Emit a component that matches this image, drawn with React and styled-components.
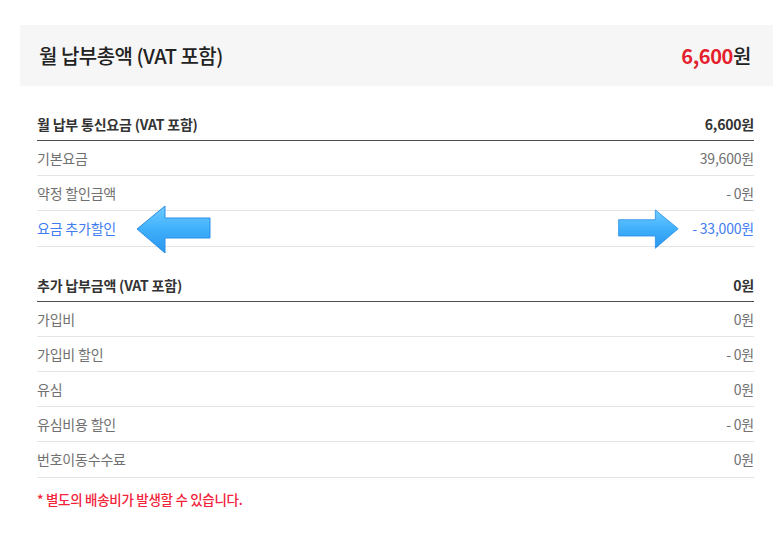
import React from 'react';
import styled, { createGlobalStyle } from 'styled-components';

const GlobalStyle = createGlobalStyle`
  html, body {
    margin: 0;
    padding: 0;
    background: #fff;
  }
  body {
    font-family: "Noto Sans CJK KR", "Noto Sans", sans-serif;
  }
`;

const monthly = [
  { label: '기본요금', value: '39,600원' },
  { label: '약정 할인금액', value: '- 0원' },
  { label: '요금 추가할인', value: '- 33,000원', highlight: true },
];

const extra = [
  { label: '가입비', value: '0원' },
  { label: '가입비 할인', value: '- 0원' },
  { label: '유심', value: '0원' },
  { label: '유심비용 할인', value: '- 0원' },
  { label: '번호이동수수료', value: '0원' },
];

const Arrow = ({ dir }) => {
  // drawn pointing left, mirrored for the right one
  return (
    <svg width="76" height="50" viewBox="0 0 76 50" style={dir === 'right' ? { transform: 'scaleX(-1)' } : undefined}>
      <defs>
        <linearGradient id={`ag-${dir}`} x1="0" y1="0" x2="0" y2="1">
          <stop offset="0" stopColor="#6fcbff" />
          <stop offset="0.5" stopColor="#3fb0fb" />
          <stop offset="1" stopColor="#2a95ee" />
        </linearGradient>
      </defs>
      <path
        d="M1 24 L29 1 L29 13 L74 13 L74 33 L29 33 L29 48 Z"
        fill={`url(#ag-${dir})`}
        stroke="#2b8fe6"
        strokeWidth="1"
        strokeLinejoin="round"
      />
    </svg>
  );
};

const App = () => {
  return (
    <Page>
      <GlobalStyle />
      <TotalBox>
        <TotalLabel>월 납부총액 (VAT 포함)</TotalLabel>
        <TotalValue>
          <em>6,600</em>원
        </TotalValue>
      </TotalBox>

      <Section>
        <HeadRow>
          <span>월 납부 통신요금 (VAT 포함)</span>
          <span>6,600원</span>
        </HeadRow>
        {monthly.map((r) => (
          <Row key={r.label} $blue={r.highlight}>
            <span>{r.label}</span>
            <span>{r.value}</span>
            {r.highlight && (
              <>
                <LeftArrow><Arrow dir="left" /></LeftArrow>
                <RightArrow><Arrow dir="right" /></RightArrow>
              </>
            )}
          </Row>
        ))}
      </Section>

      <Section>
        <HeadRow>
          <span>추가 납부금액 (VAT 포함)</span>
          <span>0원</span>
        </HeadRow>
        {extra.map((r) => (
          <Row key={r.label}>
            <span>{r.label}</span>
            <span>{r.value}</span>
          </Row>
        ))}
      </Section>

      <Note>* 별도의 배송비가 발생할 수 있습니다.</Note>
    </Page>
  );
};

const Page = styled.div`
  padding: 25px 0 30px 20px;
`;

const TotalBox = styled.div`
  height: 61px;
  background: #f6f6f6;
  display: flex;
  align-items: center;
  justify-content: space-between;
  padding: 0 22px 0 19px;
  color: #222;
`;

const TotalLabel = styled.div`
  font-size: 20px;
  font-weight: 500;
  letter-spacing: -0.5px;
`;

const TotalValue = styled.div`
  font-size: 20px;
  font-weight: 500;
  letter-spacing: -0.4px;
  em {
    font-style: normal;
    font-weight: 700;
    color: #e4202c;
  }
`;

const Section = styled.div`
  margin: 20px 19px 0 17px;
  & + & {
    margin-top: 20px;
  }
`;

const HeadRow = styled.div`
  height: 35px;
  box-sizing: border-box;
  display: flex;
  align-items: center;
  justify-content: space-between;
  padding-top: 2px;
  border-bottom: 1px solid #4c4c4c;
  font-size: 14px;
  font-weight: 700;
  color: #333;
  letter-spacing: -0.2px;
`;

const Row = styled.div`
  position: relative;
  height: 35.2px;
  box-sizing: border-box;
  display: flex;
  align-items: center;
  justify-content: space-between;
  border-bottom: 1px solid #e4e4e4;
  font-size: 14px;
  color: ${(p) => (p.$blue ? '#3f7df2' : '#707070')};
  letter-spacing: -0.2px;
`;

const LeftArrow = styled.div`
  position: absolute;
  left: 99px;
  top: -6px;
  line-height: 0;
`;

const RightArrow = styled.div`
  position: absolute;
  left: 580px;
  top: -2px;
  line-height: 0;
  svg {
    width: 62px;
    height: 41px;
  }
`;

const Note = styled.p`
  margin: 11px 0 0 17px;
  font-size: 13.5px;
  font-weight: 500;
  color: #f2233a;
  letter-spacing: -0.3px;
`;

export default App;
